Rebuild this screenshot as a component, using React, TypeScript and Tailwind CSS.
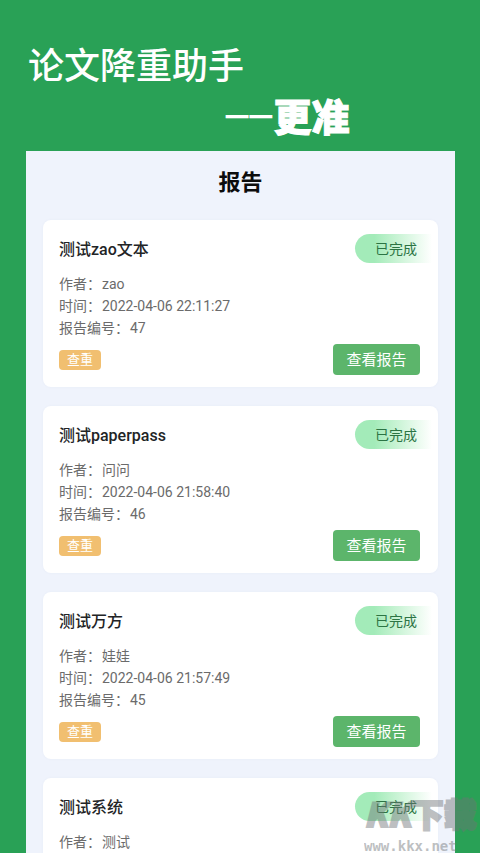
type Report = { title: string; author: string; time: string; id: number };

const reports: Report[] = [
  { title: '测试zao文本', author: 'zao', time: '2022-04-06 22:11:27', id: 47 },
  { title: '测试paperpass', author: '问问', time: '2022-04-06 21:58:40', id: 46 },
  { title: '测试万方', author: '娃娃', time: '2022-04-06 21:57:49', id: 45 },
  { title: '测试系统', author: '测试', time: '', id: 0 },
];

function ReportCard({ report }: { report: Report }) {
  return (
    <article className="rounded-lg bg-white pb-3 pt-3.5 shadow-[0_0_3px_rgba(60,80,120,0.04)]">
      <div className="flex h-[29px] items-center justify-between pl-4 pr-1.5">
        <h3 className="pt-0.5 text-base font-medium text-[#222426]">{report.title}</h3>
        <span className="flex h-[29px] w-[77px] items-center rounded-l-full bg-linear-to-r from-[#a3ebb9] from-25% to-white pl-5 text-sm text-[#2c7444]">
          已完成
        </span>
      </div>
      <dl className="mt-2.5 px-4 text-sm/[22px] text-[#6b6b6b]">
        <div className="flex gap-px">
          <dt>作者：</dt>
          <dd>{report.author}</dd>
        </div>
        {report.time && (
          <>
            <div className="flex gap-px">
              <dt>时间：</dt>
              <dd>{report.time}</dd>
            </div>
            <div className="flex gap-px">
              <dt>报告编号：</dt>
              <dd>{report.id}</dd>
            </div>
          </>
        )}
      </dl>
      {report.time && (
        <div className="mt-[5px] flex items-center justify-between pl-4 pr-[18px]">
          <span className="flex h-5 w-[42px] items-center justify-center rounded bg-[#f1bf70] text-[13px] text-white">
            查重
          </span>
          <button
            type="button"
            className="flex h-[31px] w-[87px] items-center justify-center rounded bg-[#5cb56b] pt-px text-[15px] text-white"
          >
            查看报告
          </button>
        </div>
      )}
    </article>
  );
}

export default function App() {
  return (
    <div
      lang="zh-CN"
      className="relative flex h-screen flex-col overflow-hidden bg-[#29a156] font-[Roboto,'Noto_Sans_CJK_SC',sans-serif]"
    >
      <header className="h-[151px] shrink-0 pt-[38px] text-white">
        <h1 className="pl-7 font-['Noto_Sans_CJK_SC',sans-serif] text-[36px]/[50px] font-medium">论文降重助手</h1>
        <p className="mt-0.5 flex items-start justify-center pl-[94px] font-['Noto_Sans_CJK_SC',sans-serif] font-black">
          <span className="text-[28px]/[46px]">—</span>
          <span className="-ml-0.5 text-[28px]/[46px]">—</span>
          <span className="text-[38px]/[50px] [-webkit-text-stroke:1px_white]">更准</span>
        </p>
      </header>

      <main className="ml-[26px] mr-[25px] min-h-0 flex-1 overflow-hidden bg-[#eff3fc] px-[17px] pt-4">
        <h2 className="text-center text-[22px]/[32px] font-bold text-[#0c0c0c]">报告</h2>
        <div className="mt-[21px] flex flex-col gap-[19px]">
          {reports.map((report) => (
            <div key={report.title} className="last:*:pb-16">
              <ReportCard report={report} />
            </div>
          ))}
        </div>
      </main>

      <div className="pointer-events-none absolute bottom-0 right-0 w-[116px] whitespace-nowrap font-['Noto_Sans_CJK_SC',sans-serif] text-[#6f7377] opacity-45">
        <div className="flex items-center pb-1 text-[33px]/[44px] font-black [-webkit-text-stroke:2px_#6f7377]">
          <span className="italic">KK</span>
          <span>下载</span>
        </div>
        <div className="font-['DejaVu_Sans_Mono',monospace] text-[14px]/[14px] font-bold">www.kkx.net</div>
      </div>
    </div>
  );
}
